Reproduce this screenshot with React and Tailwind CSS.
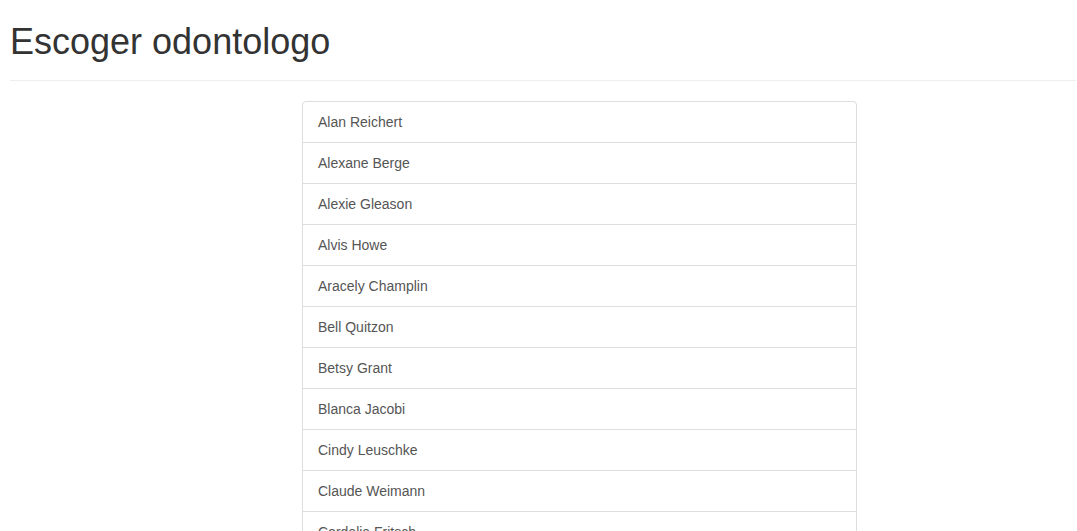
import React from 'react';

const dentists = [
    'Alan Reichert',
    'Alexane Berge',
    'Alexie Gleason',
    'Alvis Howe',
    'Aracely Champlin',
    'Bell Quitzon',
    'Betsy Grant',
    'Blanca Jacobi',
    'Cindy Leuschke',
    'Claude Weimann',
    'Cordelia Fritsch',
    'Dario Kuhn',
];

const App = () => {
    return (
        <div className="min-h-screen bg-white pl-[10px] pr-px font-['Liberation_Sans',Arial,sans-serif] text-[14px] text-[#333]">
            {/* Título */}
            <h1 className="pt-[22px] text-[36px] leading-[39.6px] font-normal text-[#333]">Escoger odontologo</h1>
            <hr className="mt-[18px] mb-[20px] border-0 border-t border-[#eee]" />

            {/* Lista */}
            <div className="ml-[292px] w-[555px] flex flex-col">
                {dentists.map((name, i) => (
                    <a
                        key={name}
                        href="#"
                        className={`block px-[15px] py-[10px] leading-[20px] text-[#555] border border-[#ddd] bg-white hover:bg-[#f5f5f5] ${i > 0 ? '-mt-px' : 'rounded-t-[4px]'}`}
                    >
                        {name}
                    </a>
                ))}
            </div>
        </div>
    );
};

export default App;
